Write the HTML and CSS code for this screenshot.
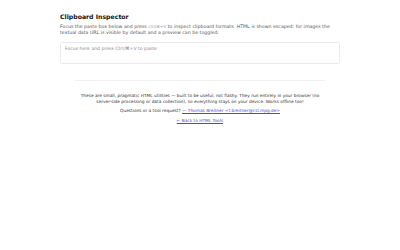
FILE: index.html
```html
<!DOCTYPE html>
<html lang="en">
<head>
    <meta charset="UTF-8">
    <meta name="viewport" content="width=device-width, initial-scale=1.0">
    <title>Clipboard Inspector</title>
    <link rel="stylesheet" href="styles.css">
</head>
<body>
    <main class="container">
        <h1 class="title">Clipboard Inspector</h1>
        <p class="intro">Focus the paste box below and press <kbd>ctrl/⌘+V</kbd> to inspect clipboard formats. HTML is shown escaped; for images the textual data URL is visible by default and a preview can be toggled.</p>
        <!-- Paste target -->
        <div class="paste-box" contenteditable="true" data-placeholder="Focus here and press Ctrl/⌘+V to paste"></div>
    </main>

    <footer class="footer">
        <hr class="divider">
        <p>These are small, pragmatic HTML utilities — built to be useful, not flashy. They run entirely in your browser (no server-side processing or data collection), so everything stays on your device. Works offline too!</p>
        <p>Questions or a tool request? <a href="#">— Thomas Breitner &lt;t.breitner@csl.mpg.de&gt;</a></p>
        <p><a href="#">← Back to HTML Tools</a></p>
    </footer>
</body>
</html>
```

FILE: styles.css
```css
* {
    box-sizing: border-box;
    margin: 0;
    padding: 0;
}
body {
    font-family: "DejaVu Sans", Verdana, sans-serif;
    color: #222;
    background-color: #fff;
}
.container {
    width: 280px;
    margin: 0 auto;
    padding-top: 13px;
}
.title {
    font-size: 6.2px;
    line-height: 8px;
    font-weight: bold;
    color: #111;
    margin-bottom: 3px;
}
.intro {
    font-size: 4.7px;
    line-height: 6px;
    color: #555;
}
.intro kbd {
    font-family: "DejaVu Sans", sans-serif;
    font-size: 4px;
    line-height: 1;
    color: #999;
}
.paste-box {
    margin-top: 6px;
    min-height: 22px;
    padding: 3px 4px;
    border: 1px solid #ebebeb;
    border-radius: 2px;
    font-size: 4.6px;
    line-height: 6px;
    outline: none;
}
.paste-box:empty::before {
    content: attr(data-placeholder);
    color: #888;
}
.footer {
    width: 250px;
    margin: 0 auto;
    padding-top: 16px;
    text-align: center;
    font-size: 4.3px;
    line-height: 5.5px;
    color: #333;
}
.divider {
    border: none;
    border-top: 1px solid #f0f0f0;
    margin-bottom: 12px;
}
.footer p {
    margin-bottom: 4px;
}
.footer a {
    color: #4a4ad6;
}
```
